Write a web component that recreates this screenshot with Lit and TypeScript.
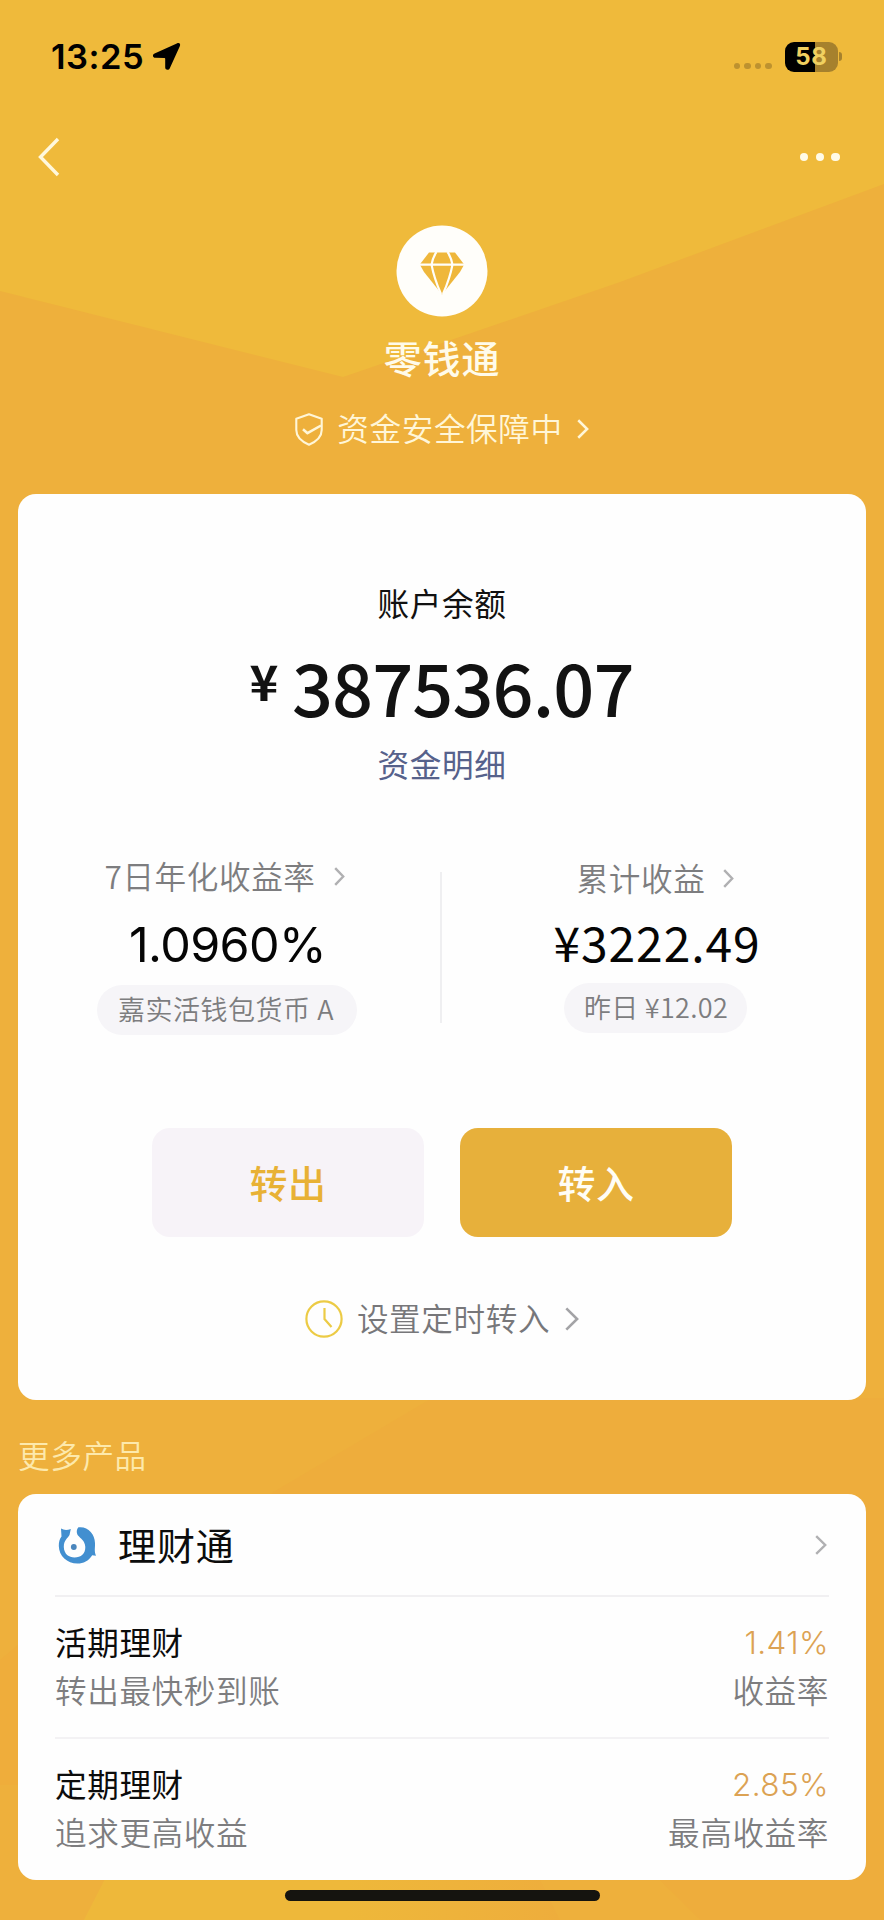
import { LitElement, html, css, svg } from "lit";
import { customElement, property } from "lit/decorators.js";

@customElement("chevron-icon")
class ChevronIcon extends LitElement {
  @property({ type: Number }) w = 11;
  @property({ type: Number }) h = 19;
  @property({ type: Number }) stroke = 2.4;
  static styles = css`
    :host { display: block; flex: none; }
    svg { display: block; }
  `;
  render() {
    const s = this.stroke / 2;
    return html`<svg width=${this.w} height=${this.h} viewBox="0 0 ${this.w} ${this.h}" fill="none">
      <path d="M${s} ${s} L${this.w - s - 0.6} ${this.h / 2} L${s} ${this.h - s}" stroke="currentColor" stroke-width=${this.stroke}></path>
    </svg>`;
  }
}

interface Product {
  name: string;
  note: string;
  rate: string;
  label: string;
}

const products: Product[] = [
  { name: "活期理财", note: "转出最快秒到账", rate: "1.41%", label: "收益率" },
  { name: "定期理财", note: "追求更高收益", rate: "2.85%", label: "最高收益率" },
];

const backdrop = svg`
  <defs>
    <linearGradient id="glow" x1="0" x2="1" y1="0" y2="0">
      <stop offset="0" stop-color="#eeb83a"></stop>
      <stop offset="0.55" stop-color="#eeb83a"></stop>
      <stop offset="1" stop-color="#eead3c"></stop>
    </linearGradient>
  </defs>
  <rect width="884" height="1920" fill="#eeb03c"></rect>
  <path d="M0 0H884V184L620 282L343 377L0 291Z" fill="#efba3b"></path>
  <path d="M432 1398L884 1398V1920H700L270 1494Z" fill="#eead3c"></path>
  <path d="M0 1660L18 1645V1785H0Z" fill="#efad3b"></path>
  <path d="M105 1879L84 1920H560L540 1879Z" fill="url(#glow)"></path>`;

@customElement("app-root")
class AppRoot extends LitElement {
  static styles = css`
    :host {
      display: block;
      position: relative;
      width: 884px;
      height: 1920px;
      overflow: hidden;
      font-family: "Noto Sans CJK SC", sans-serif;
      font-size: 31.6px;
      font-weight: 350;
      letter-spacing: 0.6px;
      color: #111;
    }
    * { box-sizing: border-box; }
    svg { display: block; flex: none; }
    .backdrop { position: absolute; inset: 0; z-index: -1; }
    .page { display: flex; flex-direction: column; height: 1920px; padding: 0 18px; position: relative; z-index: 0; }
    .row { display: flex; align-items: center; }
    .status { height: 113px; padding: 0 24px 0 33px; justify-content: space-between; }
    .time { font: 600 34.5px/40px Inter, sans-serif; letter-spacing: 0.5px; color: #000; margin-right: 8px; }
    .signal { gap: 4px; margin: 19px 13px 0 0; }
    .signal i { width: 6.6px; height: 6.6px; border-radius: 50%; background: #bd922f; }
    .battery {
      width: 53px; height: 30px; border-radius: 9px; justify-content: center;
      background: linear-gradient(90deg, #000 30px, #a6812d 30px);
      font: 700 24px/30px Inter, sans-serif; letter-spacing: 0.8px; color: #f0d060;
    }
    .nub { width: 3px; height: 9px; margin-left: 1px; border-radius: 0 3px 3px 0; background: #a6812d; }
    .nav { height: 88px; padding: 0 26px 0 20px; justify-content: space-between; color: #fff8dc; }
    .more { gap: 7.2px; }
    .more i { width: 8.6px; height: 8.6px; border-radius: 50%; background: #fffbe8; }
    .hero { display: flex; flex-direction: column; align-items: center; height: 293px; padding-top: 24px; color: #fffbea; }
    .title { font-size: 38px; line-height: 50px; font-weight: 500; letter-spacing: 0.8px; margin-top: 15px; }
    .safe { height: 50px; margin-top: 22px; color: #fff6d8; }
    .safe span { margin: -4px 14px 0 14px; line-height: 50px; }
    .card { background: #fefefe; border-radius: 18px; width: 848px; flex: none; }
    .account { height: 906px; display: flex; flex-direction: column; align-items: center; padding-top: 84px; }
    .line { line-height: 48px; white-space: nowrap; }
    .black { font-weight: 400; }
    .amount { display: flex; height: 80px; margin-top: 20px; align-items: flex-start; line-height: 80px; color: #121212; }
    .yen { font-size: 49px; line-height: 52px; font-weight: 700; margin: 8px 13px 0 -1px; }
    .digits { font-size: 72px; font-weight: 500; letter-spacing: -0.9px; }
    .detail { color: #56618b; margin-top: 13px; font-weight: 400; }
    .stats { width: 848px; display: grid; grid-template-columns: 422px 2px 424px; margin-top: 75px; height: 170px; }
    .stat { display: flex; flex-direction: column; align-items: center; }
    .divider { background: #efeff1; height: 151px; margin-top: 10px; }
    .gray { color: #7d7d7f; }
    .label { height: 48px; gap: 18px; margin-top: -11px; }
    .label chevron-icon { margin-top: 3px; color: #b0b0b2; }
    .left .label { margin-right: 5px; }
    .stat.left { padding-right: 4px; }
    .stat.right { padding-left: 2px; }
    .right .label { margin-top: -9px; margin-left: 1px; }
    .rate { font: 400 48.5px/60px Inter, sans-serif; letter-spacing: -0.6px; color: #050505; margin: 16px 0 0 1px; }
    .earn { font-size: 48px; line-height: 60px; font-weight: 400; letter-spacing: 0.9px; color: #050505; margin: 10px 0 0 4px; }
    .pill {
      background: #f6f5f8; border-radius: 25px; height: 50px; line-height: 48px; margin-top: 10px;
      font-size: 27px; letter-spacing: 0.5px; color: #7d7d7f; white-space: nowrap; text-align: center;
    }
    .fund { width: 260px; padding-right: 2px; }
    .yesterday { width: 183px; margin-top: 12px; line-height: 48px; letter-spacing: 0.3px; padding-left: 2px; }
    .actions { display: flex; gap: 36px; margin-top: 95px; }
    .btn {
      width: 272px; height: 109px; border-radius: 18px; text-align: center; line-height: 108px;
      font-size: 38px; font-weight: 500; letter-spacing: 0.5px;
    }
    .out { background: #f7f3f8; color: #e8b135; }
    .in { background: #e7b03b; color: #fffdf5; }
    .actions { padding-top: 1px; }
    .timer { height: 50px; margin-top: 57px; color: #77777a; }
    .timer span { margin: -4px 15px 0 14px; line-height: 50px; }
    .timer chevron-icon { color: #a3a3a6; }
    .section { height: 94px; line-height: 110px; color: #fde9ac; margin-top: -1px; margin-bottom: 1px; }
    .products { height: 386px; padding: 0 37px 0 37px; }
    .head { height: 103px; border-bottom: 2px solid #f1f0f2; color: #b0b0b2; padding-bottom: 1px; padding-right: 2px; }
    .head svg { margin-left: 1px; }
    .head span { flex: 1; margin: 0 0 0 22px; font-size: 38px; letter-spacing: 0.9px; font-weight: 400; color: #0c0c0c; line-height: 50px; }
    .head chevron-icon { margin-top: 2px; }
    .product { height: 140px; padding-top: 20px; }
    .product + .product { border-top: 2px solid #f3f2f4; }
    .pair { display: flex; justify-content: space-between; height: 48px; line-height: 48px; }
    .pair.top { color: #0c0c0c; font-weight: 400; }
    .pct { font: 350 31.5px/51px Inter, sans-serif; letter-spacing: 0.4px; color: #dca253; }
    .home { width: 315px; height: 11px; border-radius: 6px; background: #15140f; margin: 10px auto 0; flex: none; }
  `;

  render() {
    return html`
      <svg class="backdrop" width="884" height="1920" viewBox="0 0 884 1920">${backdrop}</svg>
      <div class="page">
        <div class="row status">
          <div class="row">
            <span class="time">13:25</span>
            <svg width="29" height="29" viewBox="0 0 29 29"><path d="M24.800 1.500C27.200 .2 29 1.800 27.800 4.200L17.800 26.300C16.800 28.600 13.200 28.200 13.200 25.600V17C13.200 16.200 12.900 15.900 12.100 15.900L3.400 15.800C.6 15.700 .1 12.600 2.600 11.500Z" fill="#000"></path></svg>
          </div>
          <div class="row">
            <div class="row signal"><i></i><i></i><i></i><i></i></div>
            <div class="row battery">58</div>
            <div class="nub"></div>
          </div>
        </div>
        <div class="row nav">
          <svg width="22" height="40" viewBox="0 0 22 40" fill="none"><path d="M20 2L2.500 20L20 38" stroke="currentColor" stroke-width="3.400"></path></svg>
          <div class="row more"><i></i><i></i><i></i></div>
        </div>
        <div class="hero">
          <svg width="92" height="92" viewBox="0 0 92 92">
            <circle cx="46" cy="46" r="45.5" fill="#fffefa"></circle>
            <path d="M33 27.500H59L68.200 39.500L64 47L46 69.500L28 47L23.800 39.500Z" fill="#efb73b"></path>
            <path d="M23 39.600H69M40.500 27Q37 32 35.500 39.600Q38 53 45 69M51.500 27Q55 32 56.500 39.600Q54 53 47 69" stroke="#fffefa" stroke-width="2.200" fill="none"></path>
          </svg>
          <div class="title">零钱通</div>
          <div class="row safe">
            <svg width="28" height="33" viewBox="0 0 28 33" fill="none" stroke="currentColor" stroke-width="2.1" stroke-linejoin="round">
              <path d="M14 1.3L26.7 5.8V17C26.7 23.5 21.5 28.5 14 31.7C6.500 28.5 1.300 23.5 1.300 17V5.800Z"></path>
              <path d="M8 16.200L12.500 20.200L26 12.500" stroke-width="2.5"></path>
            </svg>
            <span>资金安全保障中</span>
            <chevron-icon .w=${12} .h=${20} .stroke=${2.5}></chevron-icon>
          </div>
        </div>

        <div class="card account">
          <div class="line black">账户余额</div>
          <div class="amount"><span class="yen">¥</span><span class="digits">387536.07</span></div>
          <div class="line detail">资金明细</div>
          <div class="stats">
            <div class="stat left">
              <div class="row label gray"><span>7日年化收益率</span><chevron-icon></chevron-icon></div>
              <div class="rate">1.0960%</div>
              <div class="pill fund">嘉实活钱包货币 A</div>
            </div>
            <div class="divider"></div>
            <div class="stat right">
              <div class="row label gray"><span>累计收益</span><chevron-icon></chevron-icon></div>
              <div class="earn">¥3222.49</div>
              <div class="pill yesterday">昨日 ¥12.02</div>
            </div>
          </div>
          <div class="actions">
            <div class="btn out">转出</div>
            <div class="btn in">转入</div>
          </div>
          <div class="row timer">
            <svg width="38" height="38" viewBox="0 0 38 38" fill="none" stroke="#eccb45" stroke-width="2.2">
              <circle cx="19" cy="19" r="17.600"></circle>
              <path d="M19.500 8V19L26.500 27"></path>
            </svg>
            <span>设置定时转入</span>
            <chevron-icon .w=${14} .h=${24} .stroke=${2.6}></chevron-icon>
          </div>
        </div>

        <div class="section">更多产品</div>

        <div class="card products">
          <div class="row head">
            <svg width="40" height="40" viewBox="0 0 40 40">
              <path d="M5 4.500Q9 7 14.800 5L13.500 11C12 14 7.800 16 7.800 23C8 30 13 33.500 18.500 33.500C25 33.500 29.500 29.500 29.300 23C29 16.500 24.500 14.500 22 11.500C20.200 9 20.500 5 22.500 3.300C31.500 2 38.800 9.500 39 19C39.200 24 38 27 40 31.800L36.200 31.200C32.500 37 27.500 39.500 21.500 39.500C11 39.500 3 32 2.800 22C2.800 18 3.500 15 5.500 12.500Z" fill="#428fd0"></path>
              <circle cx="17.800" cy="23" r="2.900" fill="#4a86bd"></circle>
            </svg>
            <span>理财通</span>
            <chevron-icon .w=${12} .h=${20}></chevron-icon>
          </div>
          ${products.map(
            (p) => html`<div class="product">
              <div class="pair top"><span>${p.name}</span><span class="pct">${p.rate}</span></div>
              <div class="pair gray"><span>${p.note}</span><span>${p.label}</span></div>
            </div>`
          )}
        </div>
        <div class="home"></div>
      </div>
    `;
  }
}
